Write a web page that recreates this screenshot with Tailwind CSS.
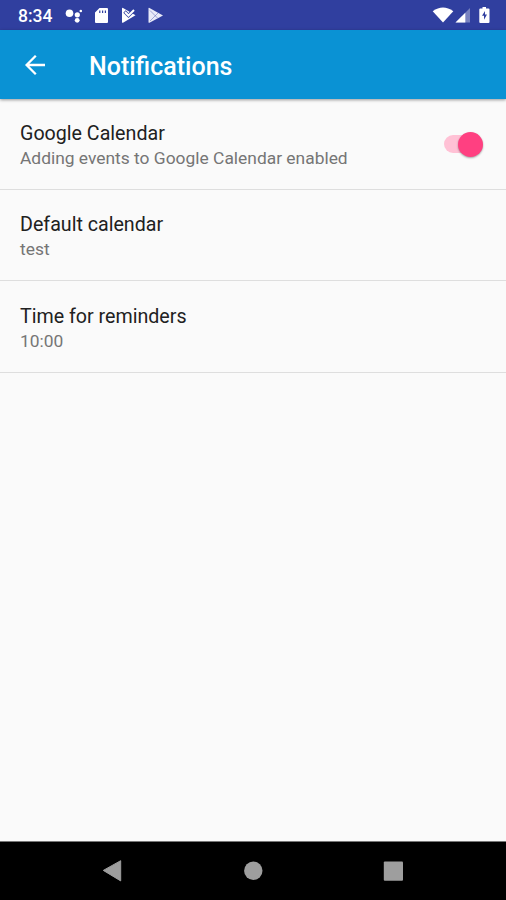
<!DOCTYPE html>
<html lang="en">
<head>
<meta charset="utf-8">
<title>Notifications</title>
<script src="https://cdn.jsdelivr.net/npm/@tailwindcss/browser@4"></script>
</head>
<body class="bg-[#fafafa]">
<div class="flex h-[900px] w-[506px] flex-col overflow-hidden bg-[#fafafa] font-[Roboto,sans-serif]">
  <div class="flex h-[30px] shrink-0 items-start justify-between bg-[#303f9f] pl-[18px] text-white">
    <div class="flex items-center">
      <span class="w-[46px] pt-[3px] text-[17.5px] leading-[26px] font-medium whitespace-nowrap">8:34</span>
      <svg class="h-[29px] w-[102px]" viewBox="64 0 102 29" fill="#fff">
        <circle cx="69.5" cy="13.2" r="3.8"/><circle cx="77.3" cy="14.8" r="2.6"/><circle cx="77.2" cy="20.3" r="2.4"/><circle cx="80.8" cy="11" r="1.3"/>
        <path fill-rule="evenodd" d="M99.500 8h7.500q1 0 1 1v13q0 1-1 1H96q-1 0-1-1V12.500zM99.200 10.500v2.500h1.200v-2.500zM102 10.500v2.500h1.200v-2.500zM104.800 10.500v2.500h1.200v-2.500z"/>
        <path d="M122 8.500q0-1 1-.5l12.500 7.200L123 22.800q-1 .3-1-.8z"/>
        <path d="M124.500 11.500l4 4 7-7" fill="none" stroke="#303f9f" stroke-width="3.400"/>
        <path d="M125 12l3.500 3.500 5.500-5.500" fill="none" stroke="#fff" stroke-width="2"/>
        <path d="M148.500 8.500q0-1 1-.5L163 15.400 149.500 22.800q-1 .3-1-.8z" fill="#e8eaf8"/>
        <path d="M150 10.500l7.500 7.500M150 21l8-8" fill="none" stroke="#303f9f" stroke-width=".8" opacity=".5"/>
      </svg>
    </div>
    <svg class="h-[29px] w-[76px]" viewBox="430 0 76 29" fill="#fff">
      <path d="M432.700 11.300Q443 3.800 453.300 11.300L443 22.500z"/>
      <path d="M470 8v14.500H455.500z" opacity=".35"/>
      <path d="M465.300 12.700v9.800h-9.800z"/>
      <path d="M482.500 7h3.500v1.500h2.500q1 0 1 1V22q0 1-1 1h-8.200q-1 0-1-1V9.500q0-1 1-1h2.200z"/>
      <path d="M485 11l-3 4.800h2v4l3-5.200h-2z" fill="#303f9f"/>
    </svg>
  </div>
  <header class="relative flex h-[69px] shrink-0 items-center bg-[#0a92d4] pt-px pl-[24px] text-white shadow-[0_1px_3px_rgba(0,0,0,0.4)]">
    <svg class="h-[22px] w-[22px]" viewBox="0 0 22 22" fill="none" stroke="#fff" stroke-width="2.300"><path d="M21 11H3M11.800 1.800L2.600 11l9.200 9.200"/></svg>
    <h1 class="ml-[43px] pt-[4px] text-[25px] leading-[32px] font-medium whitespace-nowrap">Notifications</h1>
  </header>
  <main class="flex flex-1 flex-col text-[#212121]">
    <section class="flex h-[91px] items-center justify-between border-b-[1.500px] border-[#dedede] pr-[22px] pl-[20px]">
      <div class="pt-[2px]">
        <h2 class="text-[19.650px] leading-[25px]">Google Calendar</h2>
        <p class="text-[17.400px] leading-[24px] text-[#757575]">Adding events to Google Calendar enabled</p>
      </div>
      <div class="flex h-[26px] w-[40px] items-center">
        <span class="h-[18px] w-[30px] rounded-full bg-[#ffc1d5]"></span>
        <span class="-ml-[16px] h-[25px] w-[25px] shrink-0 rounded-full bg-[#ff4081] shadow-[0_1px_2px_rgba(0,0,0,0.35)]"></span>
      </div>
    </section>
    <section class="flex h-[91px] items-center border-b-[1.500px] border-[#dedede] px-[20px]">
      <div class="pt-[2px]">
        <h2 class="text-[19.650px] leading-[25px]">Default calendar</h2>
        <p class="text-[17.400px] leading-[24px] text-[#757575]">test</p>
      </div>
    </section>
    <section class="flex h-[92px] items-center border-b-[1.500px] border-[#dedede] px-[20px]">
      <div class="pt-[3px]">
        <h2 class="text-[19.650px] leading-[25px]">Time for reminders</h2>
        <p class="text-[17.400px] leading-[24px] text-[#757575]">10:00</p>
      </div>
    </section>
  </main>
  <nav class="h-[59px] shrink-0 border-t border-[#777] bg-black">
    <svg class="h-[58px] w-[506px]" viewBox="0 842 506 58" fill="#9e9e9e">
      <path d="M103.300 870.400L120.700 860.700v20.200z" stroke="#9e9e9e" stroke-width="1" stroke-linejoin="round"/>
      <circle cx="253.300" cy="870.700" r="9.200"/>
      <rect x="383.800" y="861.500" width="19.200" height="19.200" rx="1"/>
    </svg>
  </nav>
</div>
</body>
</html>
